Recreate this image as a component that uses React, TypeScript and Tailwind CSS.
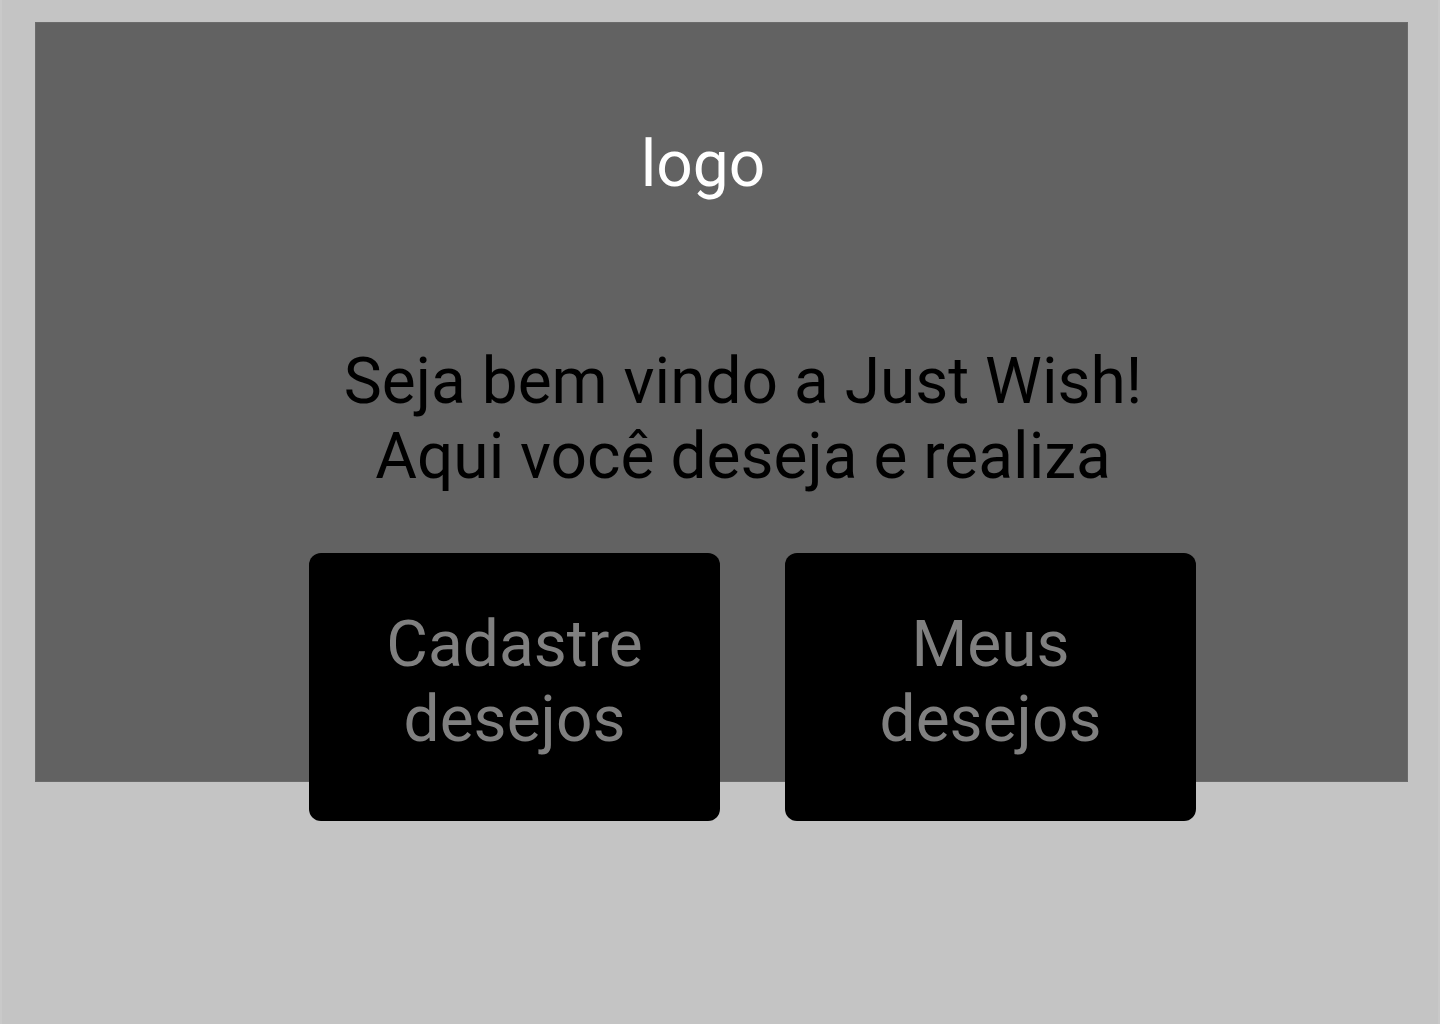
import React from 'react';

const actions = ['Cadastre desejos', 'Meus desejos'];

const App: React.FC = () => {
  return (
    <div className="min-h-screen bg-[#c4c4c4] border-x-2 border-[#c9c9c9] pt-[22px] pl-[33px] font-['Roboto',sans-serif]">
      <main className="w-[1373px] h-[760px] bg-[#626262] border border-[#6b6b6b] flex flex-col">
        <div className="pt-[104px] pr-[37px] text-center text-[64px] leading-[75px] text-white">
          logo
        </div>
        <div className="mt-[142px] pl-[43px] text-center text-[64px] leading-[75px] text-black">
          <p>Seja bem vindo a Just Wish!</p>
          <p>Aqui você deseja e realiza</p>
        </div>
        <div className="mt-[59px] pl-[273px] flex gap-[65px]">
          {actions.map((label) => (
            <button
              key={label}
              className="w-[411px] h-[268px] shrink-0 bg-black rounded-[12px] pb-[10px] flex items-center justify-center px-10 text-center text-[64px] leading-[75px] text-[#808080]"
            >
              {label}
            </button>
          ))}
        </div>
      </main>
    </div>
  );
};

export default App;
